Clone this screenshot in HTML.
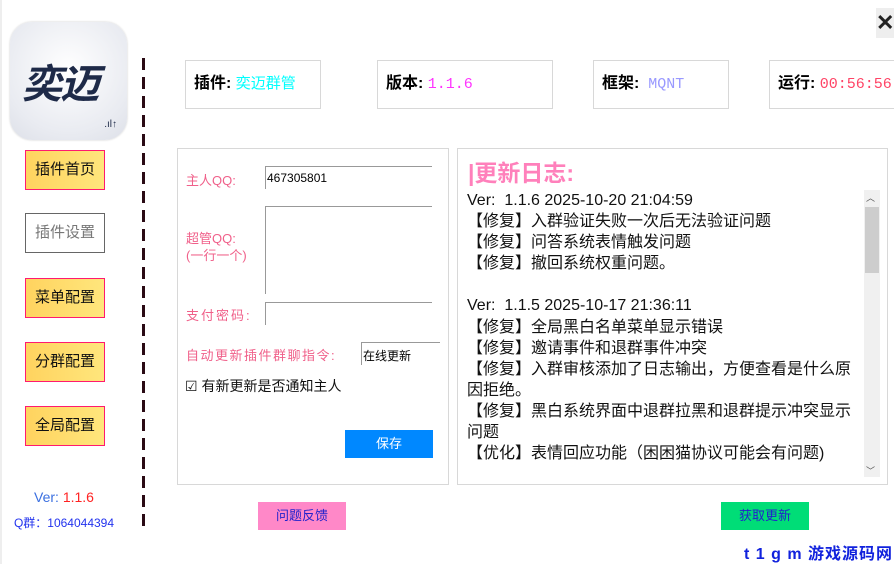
<!DOCTYPE html>
<html><head><meta charset="utf-8"><style>
*{margin:0;padding:0;box-sizing:border-box}
body{width:894px;height:564px;background:#fff;position:relative;overflow:hidden;font-family:"Liberation Sans","Noto Sans CJK SC",sans-serif}
.a{position:absolute}
.logo{left:10px;top:22px;width:117px;height:118px;border-radius:22px;background:radial-gradient(circle at 50% 40%,#fff,#e9ebf1 70%,#dde0e8);box-shadow:0 0 2px #ccc}
.logo span{position:absolute;left:12px;top:30px;font-size:40px;font-weight:bold;color:#1e2a48;font-style:italic;letter-spacing:-2px}
.dash{left:142px;top:58px;width:3px;height:468px;background:repeating-linear-gradient(#2a0a14 0 12px,transparent 12px 19px)}
.nav{left:25px;width:80px;height:40px;border:1px solid #ff1a6f;background:linear-gradient(90deg,#ffd35f,#ffe67c);font-size:15px;text-align:center;line-height:38px;color:#111}
.box{top:60px;height:49px;border:1px solid #d8d8d8;font-size:16px;font-weight:bold;line-height:46px;padding-left:8px}
.box i{font-style:normal;font-weight:normal;font-family:"Liberation Mono","Noto Sans CJK SC",monospace;font-size:15px}
.panel{top:148px;height:337px;border:1px solid #d8d8d8}
.lbl{color:#f0608a;font-size:13px}
.inp{border-top:1px solid #999;border-left:1px solid #999;font-size:12px;padding:4px 1px}
.log{left:467px;top:190px;font-size:16px;line-height:21.1px;color:#111;white-space:pre}
.btn{top:502px;width:88px;height:28px;font-size:13px;text-align:center;line-height:28px;color:#2222cc}
</style></head><body>
<div class="a" style="left:0;top:0;width:2px;height:564px;background:#eee"></div>
<div class="a logo"><span>奕迈</span><div class="a" style="right:10px;bottom:10px;font-size:10px;color:#1e2a48">.ıl↑</div></div>
<div class="a dash"></div>
<div class="a nav" style="top:150px">插件首页</div>
<div class="a nav" style="top:213px;background:#fff;border-color:#666;color:#777">插件设置</div>
<div class="a nav" style="top:278px">菜单配置</div>
<div class="a nav" style="top:342px">分群配置</div>
<div class="a nav" style="top:406px">全局配置</div>
<div class="a" style="left:0;width:128px;top:489px;text-align:center;font-size:14px;color:#3a6fe0">Ver: <span style="color:#f22">1.1.6</span></div>
<div class="a" style="left:0;width:128px;top:514px;text-align:center;font-size:12px;color:#2233ee">Q群：1064044394</div>

<div class="a box" style="left:185px;width:136px">插件: <i style="color:#0ff;font-family:'Liberation Sans','Noto Sans CJK SC',sans-serif">奕迈群管</i></div>
<div class="a box" style="left:377px;width:176px">版本: <i style="color:#f3f">1.1.6</i></div>
<div class="a box" style="left:593px;width:136px">框架: &nbsp;<i style="color:#99f">MQNT</i></div>
<div class="a box" style="left:769px;width:130px">运行: <i style="color:#f46">00:56:56</i></div>
<div class="a" style="left:876px;top:8px;width:18px;height:30px;background:#eee;font-size:22px;font-weight:bold;line-height:30px;color:#222">✕</div>

<div class="a panel" style="left:177px;width:272px"></div>
<div class="a lbl" style="left:186px;top:170px">主人QQ:</div>
<div class="a inp" style="left:265px;top:166px;width:167px;height:23px">467305801</div>
<div class="a lbl" style="left:186px;top:230px;line-height:17px">超管QQ:<br>(一行一个)</div>
<div class="a inp" style="left:265px;top:206px;width:167px;height:88px"></div>
<div class="a lbl" style="left:186px;top:305px;letter-spacing:2px">支付密码:</div>
<div class="a inp" style="left:265px;top:302px;width:167px;height:23px"></div>
<div class="a lbl" style="left:186px;top:345px;letter-spacing:1.5px">自动更新插件群聊指令:</div>
<div class="a inp" style="left:361px;top:342px;width:79px;height:23px;color:#000">在线更新</div>
<div class="a" style="left:185px;top:376px;font-size:14px;color:#111">☑ 有新更新是否通知主人</div>
<div class="a" style="left:345px;top:430px;width:88px;height:28px;background:#0088ff;color:#fff;font-size:13px;text-align:center;line-height:28px">保存</div>

<div class="a panel" style="left:457px;width:431px"></div>
<div class="a" style="left:468px;top:154px;font-size:23px;font-weight:bold;color:#ff80bb">|更新日志:</div>
<div class="a log">Ver:  1.1.6 2025-10-20 21:04:59
【修复】入群验证失败一次后无法验证问题
【修复】问答系统表情触发问题
【修复】撤回系统权重问题。

Ver:  1.1.5 2025-10-17 21:36:11
【修复】全局黑白名单菜单显示错误
【修复】邀请事件和退群事件冲突
【修复】入群审核添加了日志输出，方便查看是什么原
因拒绝。
【修复】黑白系统界面中退群拉黑和退群提示冲突显示
问题
【优化】表情回应功能（困困猫协议可能会有问题)</div>
<div class="a" style="left:864px;top:190px;width:16px;height:287px;background:#f0f0f0"></div>
<div class="a" style="left:865px;top:207px;width:14px;height:66px;background:#cdcdcd"></div>
<div class="a" style="left:866px;top:191px;font-size:9px;color:#555">︿</div>
<div class="a" style="left:866px;top:464px;font-size:9px;color:#555">﹀</div>

<div class="a btn" style="left:258px;background:#ff88c8">问题反馈</div>
<div class="a btn" style="left:721px;background:#00dd77">获取更新</div>
<div class="a" style="left:744px;top:540px;font-size:16px;font-weight:bold;color:#1122dd;letter-spacing:1px">t 1 g m 游戏源码网</div>
</body></html>
